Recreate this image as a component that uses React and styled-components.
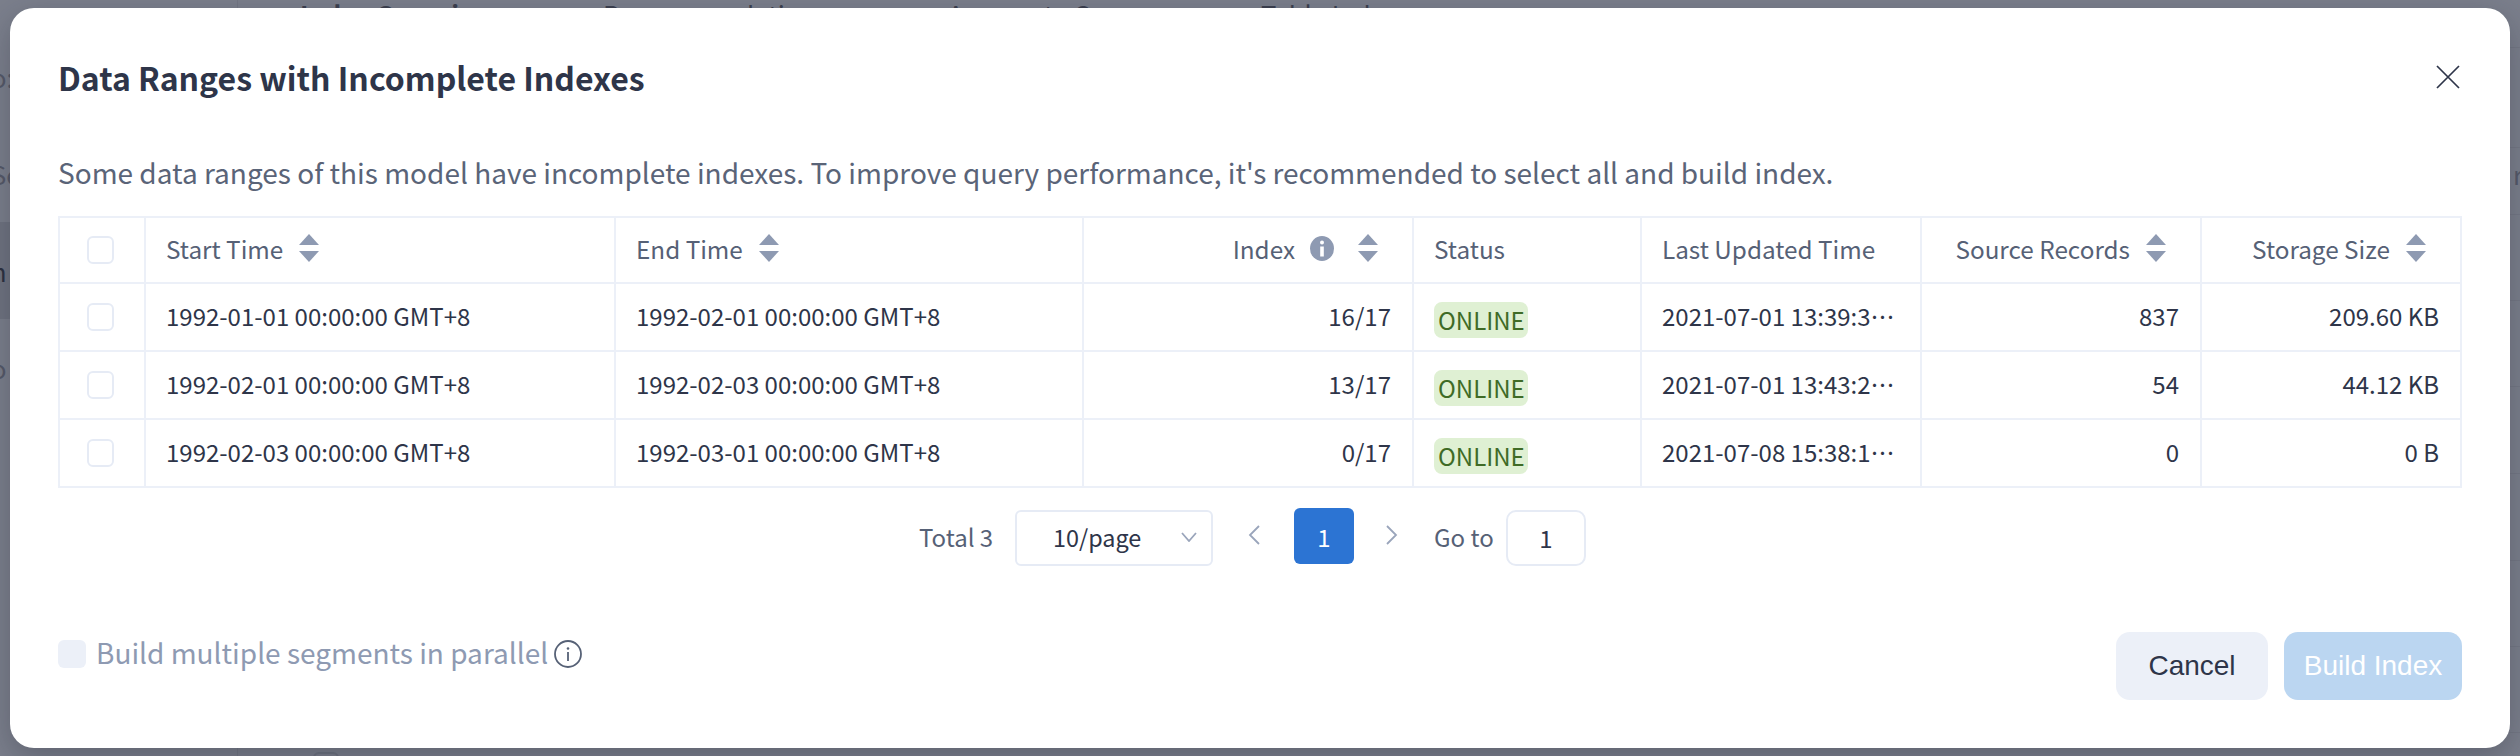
import React from 'react';
import styled, { createGlobalStyle } from 'styled-components';

const GlobalStyle = createGlobalStyle`
	html, body {
		margin: 0;
		padding: 0;
		background: #7b7f8c;
		font-family: "Noto Sans CJK SC", "Noto Sans", sans-serif;
	}
	* {
		box-sizing: border-box;
	}
`;

/* dimmed page behind the dialog */
const Backdrop = styled.div`
	position: relative;
	display: flex;
	width: 2520px;
	height: 756px;
	overflow: hidden;
	background: #7b7f8c;
	color: #3b3f4e;
`;

const Sidebar = styled.div`
	flex: none;
	width: 238px;
	padding-top: 28px;
	border-right: 1px solid #737784;
`;

const SideItem = styled.div`
	display: flex;
	align-items: center;
	height: 97px;
	font-size: 25.6px;
	text-indent: -9px;
	background: ${(props) => (props.$active ? '#6f7380' : 'transparent')};
	color: ${(props) => (props.$active ? '#2c3040' : '#555968')};
`;

const Main = styled.div`
	flex: 1;
	min-width: 0;
`;

const TabBar = styled.div`
	display: grid;
	grid-template-columns: 303px 345px 313px auto;
	height: 48px;
	padding-left: 62px;
	border-bottom: 1px solid #747885;
	font-size: 25.6px;
	line-height: 32px;
`;

const Tab = styled.div`
	margin-top: -2px;
	font-weight: ${(props) => (props.$active ? 700 : 400)};
`;

const BackRow = styled.div`
	height: ${(props) => props.$height}px;
	border-bottom: 1px solid #747885;
`;

const RightLabel = styled.div`
	padding: 8px 0 0 2275px;
	font-size: 25.6px;
	line-height: 36px;
	color: #555968;
`;

const BackCells = styled.div`
	display: grid;
	grid-template-columns: 82px 269px 731px 577px auto;
	padding: 17px 0 0 75px;
	font-size: 22.4px;
	line-height: 32px;
`;

const BackCheck = styled.div`
	width: 26px;
	height: 28px;
	margin-top: 2px;
	border: 2px solid #6e7280;
	border-radius: 6px;
`;

/* dialog */
const Modal = styled.div`
	position: absolute;
	top: 8px;
	left: 10px;
	width: 2500px;
	height: 740px;
	padding: 41px 48px 0;
	background: #ffffff;
	border-radius: 24px;
	box-shadow: 0 10px 32px rgba(30, 34, 48, 0.3);
`;

const Header = styled.div`
	display: flex;
	align-items: center;
	justify-content: space-between;
	height: 56px;
`;

const Title = styled.div`
	font-size: 32px;
	font-weight: 700;
	color: #2e3549;
`;

const CloseIcon = styled.svg`
	width: 24px;
	height: 24px;
	margin-right: 2px;
	stroke: #2e3549;
	stroke-width: 1.7;
`;

const Description = styled.div`
	margin-top: 45px;
	height: 44px;
	margin-bottom: 22px;
	font-size: 28px;
	line-height: 44px;
	white-space: nowrap;
	color: #5a6478;
`;

const Table = styled.div`
	width: 2404px;
	border-top: 2px solid #ecf0f8;
	border-left: 2px solid #ecf0f8;
`;

const Row = styled.div`
	display: grid;
	grid-template-columns: 86px 470px 468px 330px 228px 280px 280px 260px;
	height: ${(props) => (props.$head ? 66 : 68)}px;
`;

const Cell = styled.div`
	display: flex;
	align-items: center;
	justify-content: ${(props) => (props.$right ? 'flex-end' : 'flex-start')};
	min-width: 0;
	padding: 0 21px 4px 20px;
	border-right: 2px solid #ecf0f8;
	border-bottom: 2px solid #ecf0f8;
	font-size: ${(props) => (props.$head ? 24.3 : 24)}px;
	color: ${(props) => (props.$head ? '#566176' : '#2e3549')};
`;

const CheckCell = styled(Cell)`
	padding: 0 0 0 27px;
`;

const Clip = styled.span`
	overflow: hidden;
	white-space: nowrap;
	text-overflow: ellipsis;
`;

const Checkbox = styled.span`
	display: block;
	width: 27px;
	height: 28px;
	background: #ffffff;
	border: 2px solid #e6ebf5;
	border-radius: 6px;
`;

const SortIcon = styled.svg`
	flex: none;
	width: 20px;
	height: 28px;
	margin-left: 16px;
	margin-right: ${(props) => (props.$end ? 13 : 0)}px;
	fill: #8e9ab2;
`;

const InfoFilled = styled.svg`
	flex: none;
	width: 24px;
	height: 25px;
	margin-left: 15px;
	margin-right: 8px;
`;

const Badge = styled.span`
	display: block;
	margin-top: 10px;
	padding: 0 3px 0 4px;
	height: 36px;
	line-height: 36px;
	background: #dff0d3;
	border-radius: 8px;
	color: #3f6b26;
`;

const Pager = styled.div`
	display: flex;
	align-items: center;
	height: 58px;
	margin-top: 20px;
	padding-left: 861px;
	font-size: 24px;
	color: #566176;
`;

const Total = styled.span`
	width: 96px;
	margin-bottom: 2px;
`;

const Select = styled.div`
	display: flex;
	align-items: center;
	justify-content: space-between;
	width: 198px;
	height: 56px;
	margin-top: 2px;
	padding: 0 14px 2px 36px;
	border: 2px solid #e6ebf5;
	border-radius: 6px;
	font-size: 23.4px;
	color: #2e3549;
`;

const Chevron = styled.svg`
	flex: none;
	width: ${(props) => props.$w}px;
	height: ${(props) => props.$h}px;
	fill: none;
	stroke: #9aa5bb;
	stroke-width: 1.8;
`;

const PageArrow = styled.span`
	display: flex;
	justify-content: center;
	width: ${(props) => props.$w}px;
	margin-bottom: 4px;
`;

const PageButton = styled.div`
	display: flex;
	align-items: center;
	justify-content: center;
	width: 60px;
	height: 56px;
	margin-bottom: 2px;
	background: #2c74d3;
	border-radius: 6px;
	color: #ffffff;
`;

const GoLabel = styled.span`
	width: 72px;
	margin-left: 4px;
	margin-bottom: 2px;
`;

const GoInput = styled.div`
	display: flex;
	align-items: center;
	justify-content: center;
	width: 80px;
	height: 56px;
	margin-top: 2px;
	padding-bottom: 2px;
	border: 2px solid #e6ebf5;
	border-radius: 10px;
	color: #2e3549;
`;

const Footer = styled.div`
	display: flex;
	align-items: flex-start;
	justify-content: space-between;
	margin-top: 66px;
`;

const BuildOption = styled.div`
	display: flex;
	align-items: center;
	height: 28px;
	margin-top: 8px;
	font-size: 28px;
	color: #8e9ab2;
`;

const OptionLabel = styled.span`
	margin-bottom: 4px;
`;

const DisabledBox = styled.span`
	width: 28px;
	height: 28px;
	margin-right: 10px;
	background: #ecf0f8;
	border-radius: 6px;
`;

const InfoOutline = styled.svg`
	width: 28px;
	height: 28px;
	margin-left: 6px;
`;

const Actions = styled.div`
	display: flex;
	gap: 16px;
`;

const Button = styled.div`
	display: flex;
	align-items: center;
	justify-content: center;
	width: ${(props) => (props.$primary ? 178 : 152)}px;
	height: 68px;
	border-radius: 14px;
	font-family: "Liberation Sans", Arial, sans-serif;
	font-size: 28px;
	background: ${(props) => (props.$primary ? '#bbd6f1' : '#ecf0f8')};
	color: ${(props) => (props.$primary ? '#ffffff' : '#2e3549')};
`;

const rows = [
	['1992-01-01 00:00:00 GMT+8', '1992-02-01 00:00:00 GMT+8', '16/17', '2021-07-01 13:39:32 GMT+8', '837', '209.60 KB'],
	['1992-02-01 00:00:00 GMT+8', '1992-02-03 00:00:00 GMT+8', '13/17', '2021-07-01 13:43:21 GMT+8', '54', '44.12 KB'],
	['1992-02-03 00:00:00 GMT+8', '1992-03-01 00:00:00 GMT+8', '0/17', '2021-07-08 15:38:16 GMT+8', '0', '0 B'],
];

const Sort = ({ end }) => (
	<SortIcon $end={end} viewBox="0 0 20 28">
		<path d="M10 0 L20 11 H0 Z" />
		<path d="M0 17 H20 L10 28 Z" />
	</SortIcon>
);

export default function App() {
	return (
		<>
			<GlobalStyle />
			<Backdrop>
				<Sidebar>
					<SideItem>o:</SideItem>
					<SideItem>Se</SideItem>
					<SideItem $active>n</SideItem>
					<SideItem>o</SideItem>
				</Sidebar>
				<Main>
					<TabBar>
						<Tab $active>Index Overview</Tab>
						<Tab>Recommendation</Tab>
						<Tab>Aggregate Group</Tab>
						<Tab>Table Index</Tab>
					</TabBar>
					<BackRow $height={100} />
					<BackRow $height={67}>
						<RightLabel>ro</RightLabel>
					</BackRow>
					<BackRow $height={86} />
					<BackRow $height={86} />
					<BackRow $height={87} />
					<BackRow $height={87} />
					<BackRow $height={86} />
					<BackRow $height={86} />
					<BackCells>
						<BackCheck />
						<span>00001</span>
						<span>16 KB</span>
						<span>Aggregate Group</span>
						<span>LINEORDER.LO_PARTKEY_COUNT</span>
					</BackCells>
				</Main>

				<Modal>
					<Header>
						<Title>Data Ranges with Incomplete Indexes</Title>
						<CloseIcon viewBox="0 0 24 24">
							<path d="M1 1 L23 23 M23 1 L1 23" />
						</CloseIcon>
					</Header>
					<Description>
						Some data ranges of this model have incomplete indexes. To improve query performance, it's recommended to select all and build index.
					</Description>
					<Table>
						<Row $head>
							<CheckCell $head><Checkbox /></CheckCell>
							<Cell $head>Start Time<Sort /></Cell>
							<Cell $head>End Time<Sort /></Cell>
							<Cell $head $right>
								Index
								<InfoFilled viewBox="0 0 24 25">
									<ellipse cx="12" cy="12.5" rx="12" ry="12.5" fill="#8e9ab2" />
									<circle cx="12" cy="6.5" r="2" fill="#ffffff" />
									<rect x="10.2" y="10.5" width="3.6" height="10" fill="#ffffff" />
								</InfoFilled>
								<Sort end />
							</Cell>
							<Cell $head>Status</Cell>
							<Cell $head><Clip>Last Updated Time</Clip></Cell>
							<Cell $head $right>Source Records<Sort end /></Cell>
							<Cell $head $right>Storage Size<Sort end /></Cell>
						</Row>
						{rows.map((row) => (
							<Row key={row[0]}>
								<CheckCell><Checkbox /></CheckCell>
								<Cell>{row[0]}</Cell>
								<Cell>{row[1]}</Cell>
								<Cell $right>{row[2]}</Cell>
								<Cell><Badge>ONLINE</Badge></Cell>
								<Cell><Clip>{row[3]}</Clip></Cell>
								<Cell $right>{row[4]}</Cell>
								<Cell $right>{row[5]}</Cell>
							</Row>
						))}
					</Table>
					<Pager>
						<Total>Total 3</Total>
						<Select>
							10/page
							<Chevron $w={16} $h={10} viewBox="0 0 16 10">
								<path d="M1 1 L8 9 L15 1" />
							</Chevron>
						</Select>
						<PageArrow $w={81}>
							<Chevron $w={12} $h={20} viewBox="0 0 12 20">
								<path d="M11 1 L2 10 L11 19" />
							</Chevron>
						</PageArrow>
						<PageButton>1</PageButton>
						<PageArrow $w={76}>
							<Chevron $w={12} $h={20} viewBox="0 0 12 20">
								<path d="M1 1 L10 10 L1 19" />
							</Chevron>
						</PageArrow>
						<GoLabel>Go to</GoLabel>
						<GoInput>1</GoInput>
					</Pager>
					<Footer>
						<BuildOption>
							<DisabledBox />
							<OptionLabel>Build multiple segments in parallel</OptionLabel>
							<InfoOutline viewBox="0 0 28 28">
								<circle cx="14" cy="14" r="13" fill="none" stroke="#566176" strokeWidth="1.8" />
								<circle cx="14" cy="8.5" r="1.3" fill="#566176" />
								<rect x="13.1" y="12" width="1.8" height="9" fill="#566176" />
							</InfoOutline>
						</BuildOption>
						<Actions>
							<Button>Cancel</Button>
							<Button $primary>Build Index</Button>
						</Actions>
					</Footer>
				</Modal>
			</Backdrop>
		</>
	);
}
